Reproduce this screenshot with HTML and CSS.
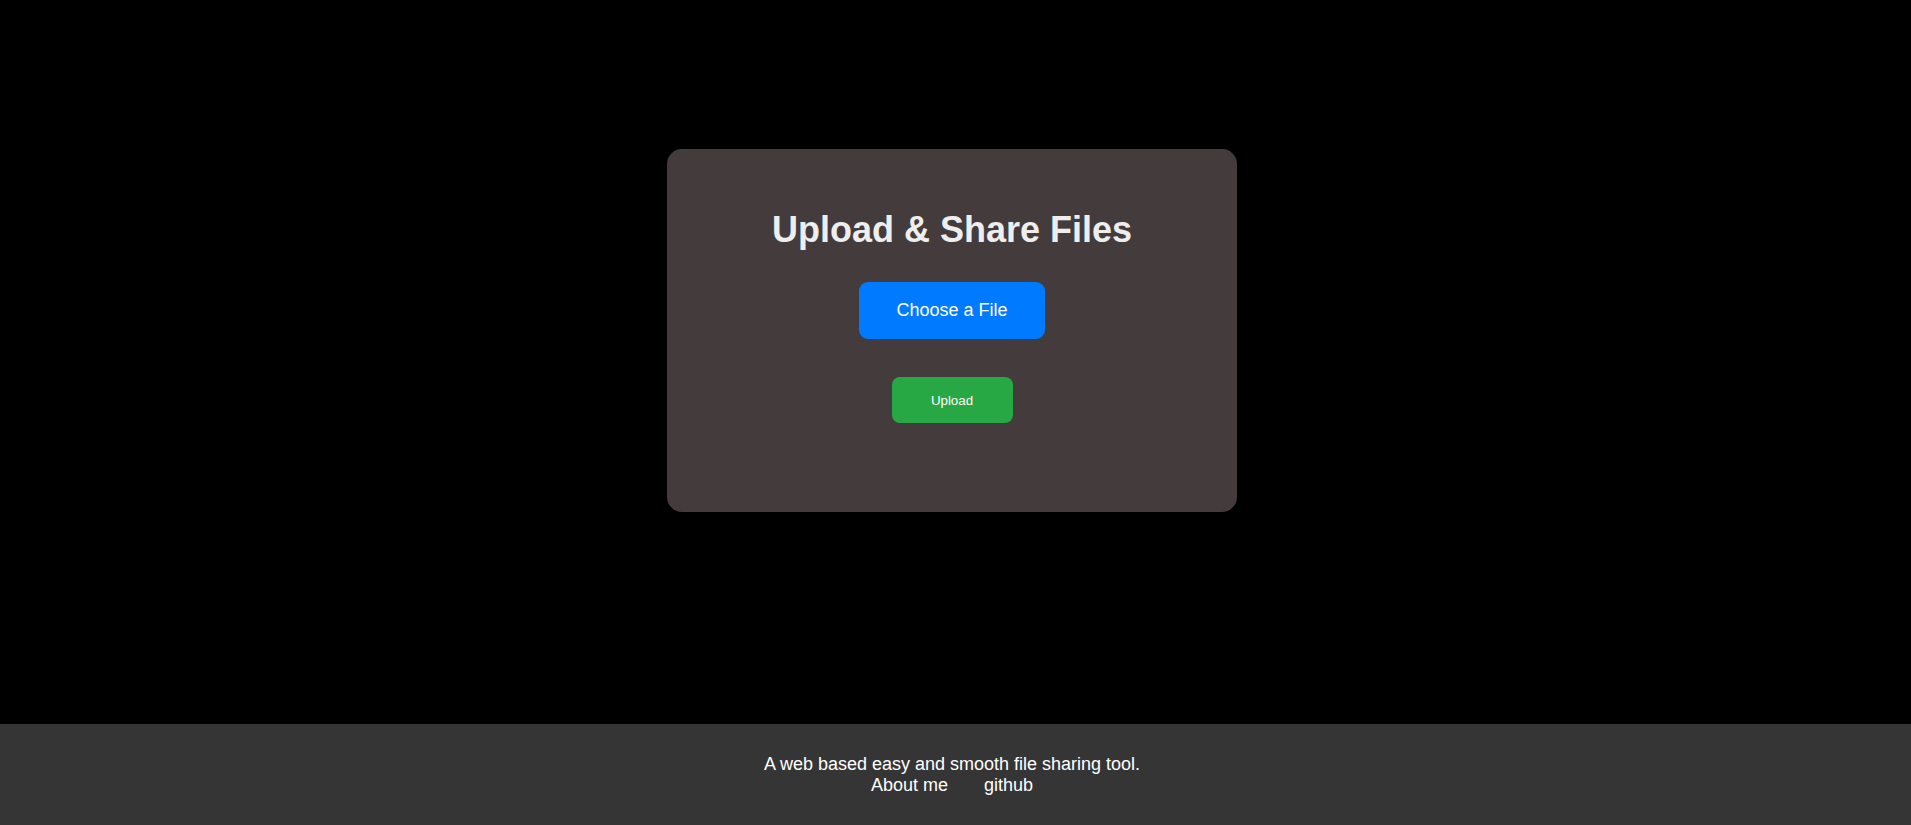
FILE: index.html
```html
<!DOCTYPE html>
<html lang="en">
<head>
<meta charset="utf-8">
<title>Upload & Share Files</title>
<link rel="stylesheet" href="styles.css">
</head>
<body>
<main class="main">
  <section class="card">
    <h1 class="title">Upload &amp; Share Files</h1>
    <label class="choose-btn" for="file">Choose a File</label>
    <input class="file-input" id="file" type="file">
    <button class="upload-btn" type="button">Upload</button>
  </section>
</main>
<footer class="footer">
  <p class="footer-text">A web based easy and smooth file sharing tool.</p>
  <nav class="footer-links">
    <a class="footer-link" href="#">About me</a>
    <a class="footer-link" href="#">github</a>
  </nav>
</footer>
</body>
</html>
```

FILE: styles.css
```css
html, body {
  margin: 0;
  padding: 0;
  height: 100%;
}

body {
  background: #000000;
  font-family: "Liberation Sans", Arial, sans-serif;
  display: flex;
  flex-direction: column;
  min-height: 100vh;
}

.main {
  flex: 1;
  display: flex;
  flex-direction: column;
  align-items: center;
  padding-top: 149px;
  padding-right: 7px;
}

.card {
  box-sizing: border-box;
  width: 570px;
  height: 363px;
  background: #433b3c;
  border-radius: 15px;
  padding-top: 60px;
  display: flex;
  flex-direction: column;
  align-items: center;
}

.title {
  margin: 0;
  font-size: 36px;
  font-weight: bold;
  color: #eeeeee;
  line-height: normal;
}

.choose-btn {
  margin-top: 31px;
  width: 186px;
  height: 57px;
  display: flex;
  align-items: center;
  justify-content: center;
  background: #007bff;
  color: #ffffff;
  font-size: 18px;
  border-radius: 9px;
  cursor: pointer;
}

.file-input {
  display: none;
}

.upload-btn {
  margin-top: 38px;
  width: 121px;
  height: 46px;
  border: none;
  padding: 0;
  background: #28a745;
  color: #ffffff;
  font-family: "Liberation Sans", Arial, sans-serif;
  font-size: 13.333px;
  border-radius: 8px;
  cursor: pointer;
}

.footer {
  height: 101px;
  box-sizing: border-box;
  background: #353535;
  padding: 30px 7px 0 0;
  text-align: center;
  color: #ffffff;
  font-size: 18px;
  line-height: normal;
}

.footer-text {
  margin: 0;
}

.footer-links {
  display: flex;
  justify-content: center;
  gap: 36px;
}

.footer-link {
  color: #ffffff;
  text-decoration: none;
}
```
